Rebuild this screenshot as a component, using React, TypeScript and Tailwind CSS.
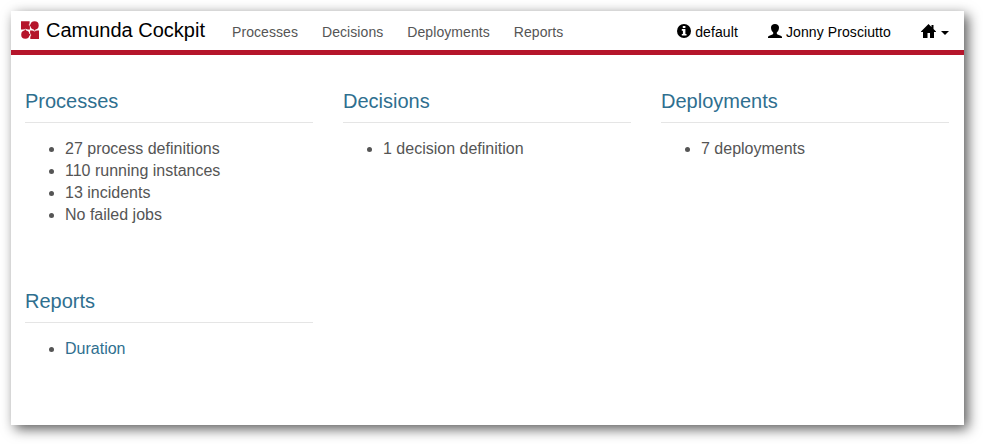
import type { ReactNode } from "react";

const navItems = ["Processes", "Decisions", "Deployments", "Reports"];

function Logo() {
  return (
    <svg className="block h-[18px] w-[18px]" viewBox="0 0 18 18">
      <g fill="#b5152b">
        <path d="M0 .3h8.600v1.900L7.600 4l1.300 1.600v3H6.800L4.600 7.800 2.200 8.600H0z" />
        <path d="M18 18H9.300v-2.200l1-1.800-1.200-1.700V9.400h2.200l2.200 1 2.300-1H18z" />
        <circle cx="13.600" cy="4.400" r="4.100" />
        <circle cx="4.300" cy="13.700" r="4.100" />
        <path d="M8.600 3.600h1.500v1.600H8.600zM12.800 8h1.600v1.600h-1.600zM7.800 12.900h1.500v1.600H7.800zM3.500 8.600h1.600v1.600H3.500z" />
      </g>
    </svg>
  );
}

function InfoIcon() {
  return (
    <svg className="block h-[14px] w-[14px]" viewBox="0 0 14 14">
      <circle cx="7" cy="7" r="7" />
      <path fill="#fff" d="M5.800 2h2.600v2H5.800zM4.800 5.100h3.600v4.800h1.100v1.600H4.800V9.900h1.100V6.700H4.800z" />
    </svg>
  );
}

function UserIcon() {
  return (
    <svg className="block h-[14px] w-[14px]" viewBox="0 0 14 14">
      <path d="M7 0C4.600 0 3 1.300 3 3.500c0 2.200.9 3.900 2.200 4.900v1c0 .7-.6 1-1.400 1.400l-2.500 1C.4 12.200 0 12.600 0 13.200v.8h14v-.8c0-.6-.4-1-1.300-1.400l-2.500-1c-.8-.4-1.400-.7-1.400-1.400v-1C10.100 7.400 11 5.700 11 3.500 11 1.300 9.400 0 7 0z" />
    </svg>
  );
}

function HomeIcon() {
  return (
    <svg className="block h-[14px] w-[15px]" viewBox="0 0 15 14">
      <path d="M7.500 0l3 3V1h2v4L15 7.500V8h-2v6H9V9H6.500v5H2V8H0v-.5z" />
    </svg>
  );
}

function Panel({ title, children }: { title: string; children: ReactNode }) {
  return (
    <section>
      <h3 className="h-[43px] border-b border-[#e5e5e5] pt-2.5 text-[20px] leading-[22px] text-[#2f6f8f]">
        {title}
      </h3>
      <ul className="mt-[15px] list-disc pl-10 text-[16px] leading-[22px]">{children}</ul>
    </section>
  );
}

export default function App() {
  return (
    <div className="h-[444px] w-[983px] overflow-hidden bg-white p-[11px] font-['Liberation_Sans',Arial,sans-serif] text-[#555]">
      <div className="h-[414px] w-[953px] bg-white shadow-[4px_4px_12px_rgba(0,0,0,0.65)]">
        <header className="flex h-[44px] border-b-5 border-[#b5152b] pl-2.5 text-[14px] text-black">
          <div className="flex pt-2.5">
            <Logo />
            <span className="-mt-[3px] ml-[7px] w-[159px] whitespace-nowrap text-[20px] leading-[24px]">
              Camunda Cockpit
            </span>
          </div>
          <nav className="ml-[27px] flex gap-6 pt-[11px] leading-5 tracking-[0.07px] text-[#555]">
            {navItems.map((item) => (
              <a key={item}>{item}</a>
            ))}
          </nav>
          <div className="ml-auto flex pr-[15px] pt-[11px] leading-5 tracking-[0.1px]">
            <div className="flex gap-1">
              <span className="pt-0.5"><InfoIcon /></span>
              <span>default</span>
            </div>
            <div className="ml-[30px] flex gap-1">
              <span className="pt-0.5"><UserIcon /></span>
              <span>Jonny Prosciutto</span>
            </div>
            <div className="ml-[30px] flex gap-[5px]">
              <span className="pt-0.5"><HomeIcon /></span>
              <svg className="mt-[9px] h-1 w-2" viewBox="0 0 8 4">
                <path d="M0 0h8L4 4z" />
              </svg>
            </div>
          </div>
        </header>
        <main className="grid grid-cols-[288px_288px_288px] grid-rows-[200px_auto] gap-x-[30px] pl-3.5 pt-[25px]">
          <Panel title="Processes">
            <li>27 process definitions</li>
            <li>110 running instances</li>
            <li>13 incidents</li>
            <li>No failed jobs</li>
          </Panel>
          <Panel title="Decisions">
            <li>1 decision definition</li>
          </Panel>
          <Panel title="Deployments">
            <li>7 deployments</li>
          </Panel>
          <Panel title="Reports">
            <li>
              <a className="text-[#2f6f8f]">Duration</a>
            </li>
          </Panel>
        </main>
      </div>
    </div>
  );
}
